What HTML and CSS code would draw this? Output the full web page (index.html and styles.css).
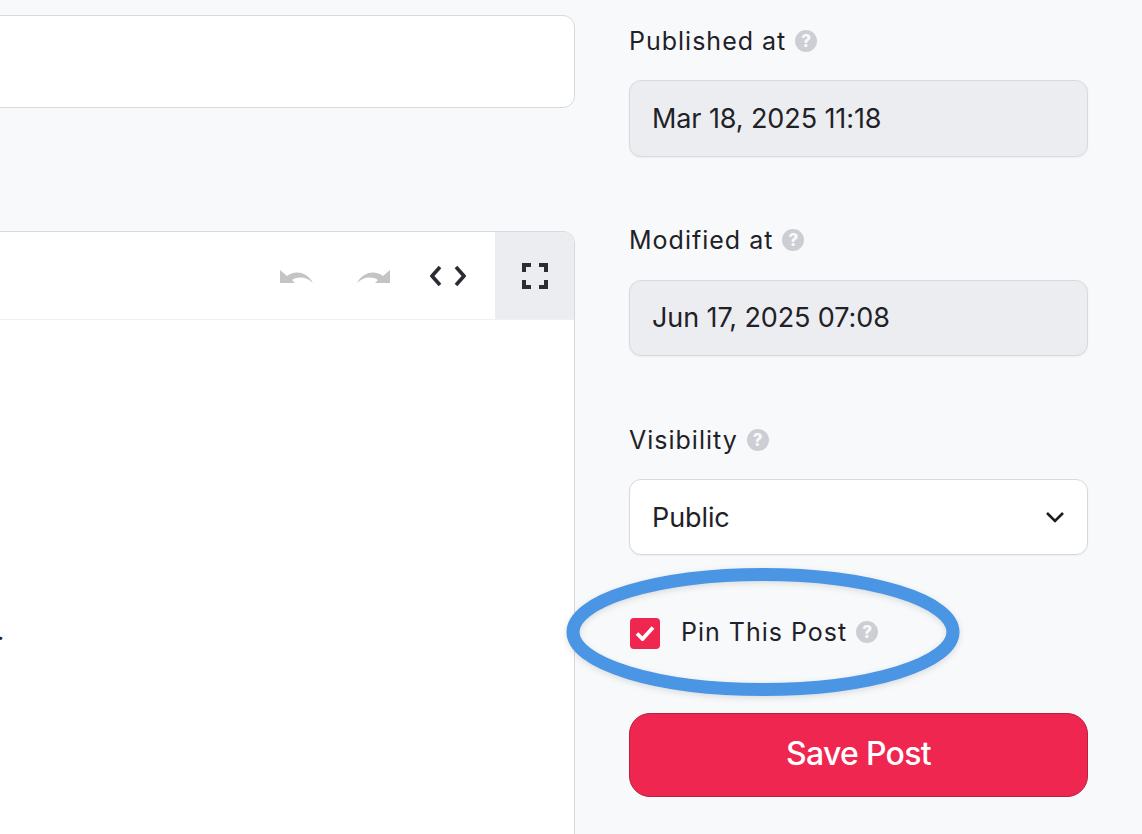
FILE: index.html
```html
<!DOCTYPE html>
<html lang="en">
<head>
    <meta charset="UTF-8">
    <meta name="viewport" content="width=device-width, initial-scale=1.0">
    <title>Edit Post</title>
    <link rel="stylesheet" href="styles.css">
</head>
<body>
    <div class="page">
        <main class="main-col">
            <div class="title-box"></div>
            <div class="editor">
                <div class="toolbar">
                    <button class="tool tool-undo" type="button" aria-label="Undo">
                        <svg width="33" height="14" viewBox="0 0 33 14"><path d="M0 1l7 6C14 1 27 2 33 14C26 8 19 7 12 11l3 3H0z" fill="#c4c4c4"/></svg>
                    </button>
                    <button class="tool tool-redo" type="button" aria-label="Redo">
                        <svg width="33" height="14" viewBox="0 0 33 14"><path d="M33 1l-7 6C19 1 6 2 0 14C7 8 14 7 21 11l-3 3h15z" fill="#c4c4c4"/></svg>
                    </button>
                    <button class="tool tool-code" type="button" aria-label="Code">
                        <svg width="36" height="22" viewBox="0 0 36 22"><path d="M10 2l-8 9 8 9M26 2l8 9-8 9" fill="none" stroke="#2b2d33" stroke-width="3.600"/></svg>
                    </button>
                    <button class="tool-full" type="button" aria-label="Fullscreen">
                        <svg width="26" height="26" viewBox="0 0 26 26"><path d="M2 9V2h7M17 2h7v7M24 17v7h-7M9 24H2v-7" fill="none" stroke="#2b2d33" stroke-width="4"/></svg>
                    </button>
                </div>
                <div class="editor-body"><p class="cut-text">.</p></div>
            </div>
        </main>
        <aside class="side-col">
            <div class="field">
                <label class="field-label">Published at <span class="help">?</span></label>
                <div class="input input-off">Mar 18, 2025 11:18</div>
            </div>
            <div class="field">
                <label class="field-label">Modified at <span class="help">?</span></label>
                <div class="input input-off">Jun 17, 2025 07:08</div>
            </div>
            <div class="field field-last">
                <label class="field-label">Visibility <span class="help">?</span></label>
                <div class="input input-select">
                    Public
                    <svg width="20" height="12" viewBox="0 0 20 12"><path d="M2 2l8 8 8-8" fill="none" stroke="#1c1d21" stroke-width="2.600"/></svg>
                </div>
            </div>
            <div class="pin">
                <span class="checkbox">
                    <svg width="20" height="16" viewBox="0 0 20 16"><path d="M2 8.500l5.500 5.500L18 2.500" fill="none" stroke="#fff" stroke-width="3.800"/></svg>
                </span>
                <span class="pin-text">Pin This Post</span>
                <span class="help">?</span>
                <svg class="ring" width="394" height="128" viewBox="0 0 394 128"><ellipse cx="197" cy="64" rx="190" ry="57.500" fill="none" stroke="#4a96e4" stroke-width="13"/></svg>
            </div>
            <button class="save-btn" type="button">Save Post</button>
        </aside>
    </div>
</body>
</html>
```

FILE: styles.css
```css
* {
  box-sizing: border-box;
  margin: 0;
  padding: 0;
  font-family: Inter, 'Noto Sans', sans-serif;
}

body {
  background: #f8f9fb;
  color: #1f2127;
  height: 834px;
  overflow: hidden;
}

.page {
  display: grid;
  grid-template-columns: 595px 459px;
  column-gap: 54px;
  margin-left: -20px;
}

.main-col {
  padding-top: 15px;
}

.title-box {
  height: 93px;
  background: #fff;
  border: 1px solid #d7d9de;
  border-radius: 12px;
}

.editor {
  margin-top: 123px;
  height: 640px;
  background: #fff;
  border: 1px solid #d7d9de;
  border-radius: 12px 12px 0 0;
}

.toolbar {
  display: flex;
  justify-content: flex-end;
  align-items: center;
  height: 88px;
  border-bottom: 1px solid #eff0f3;
}

.tool, .tool-full {
  border: 0;
  background: none;
  display: flex;
  align-items: center;
  justify-content: center;
}

.tool-undo {
  margin-right: 44px;
}

.tool-redo {
  margin-right: 40px;
}

.tool-code {
  margin-right: 29px;
}

.tool-full {
  width: 79px;
  height: 87px;
  background: #ecedf1;
  border-top-right-radius: 11px;
}

.editor-body {
  padding: 296px 0 0 16px;
}

.cut-text {
  font-size: 25px;
  line-height: 30px;
}

.side-col {
  padding-top: 21.6px;
}

.field {
  margin-bottom: 64.4px;
}

.field-last {
  margin-bottom: 0;
}

.field-label {
  display: flex;
  align-items: center;
  gap: 9px;
  height: 38px;
  font-size: 25px;
  letter-spacing: 1px;
  margin-bottom: 20.5px;
}

.help {
  display: inline-flex;
  align-items: center;
  justify-content: center;
  width: 22px;
  height: 22px;
  border-radius: 50%;
  background: #cdced3;
  color: #f8f9fb;
  font-size: 17px;
  font-weight: 800;
  letter-spacing: 0;
}

.input {
  display: flex;
  align-items: center;
  height: 76.6px;
  padding: 0 22px;
  border: 1px solid #d7d9de;
  border-radius: 12px;
  font-size: 27px;
  letter-spacing: -0.1px;
  box-shadow: 0 1px 2px rgba(0, 0, 0, 0.05);
}

.input-off {
  background: #ecedf1;
}

.input-select {
  height: 76px;
  background: #fff;
  justify-content: space-between;
}

.pin {
  position: relative;
  display: flex;
  align-items: center;
  height: 32px;
  margin-top: 60.9px;
  padding-left: 1px;
  font-size: 25px;
  letter-spacing: 1px;
}

.pin .help {
  margin-left: 9px;
}

.checkbox {
  display: flex;
  align-items: center;
  justify-content: center;
  width: 30px;
  height: 31px;
  margin-top: 3px;
  background: #ef264f;
  border-radius: 4px;
  margin-right: 21px;
}

.ring {
  position: absolute;
  left: -63px;
  top: -48px;
  filter: drop-shadow(0 2px 3px rgba(0, 0, 0, 0.12));
}

.save-btn {
  display: block;
  width: 100%;
  height: 84px;
  margin-top: 65px;
  padding-bottom: 2px;
  background: #ef264f;
  border: 1px solid #b8203f;
  border-radius: 21px;
  color: #fff;
  font-size: 32px;
  font-weight: 500;
  letter-spacing: -0.7px;
}
```
